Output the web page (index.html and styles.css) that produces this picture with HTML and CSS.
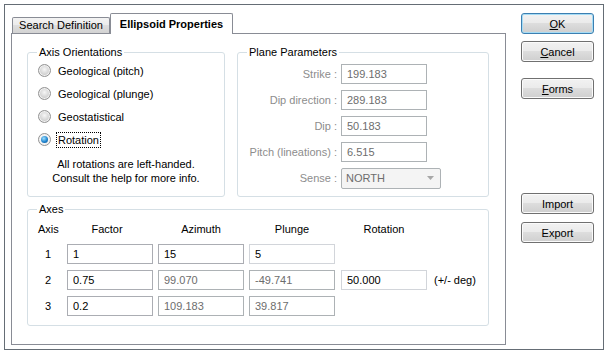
FILE: index.html
```html
<!DOCTYPE html>
<html>
<head>
  <title>Ellipsoid Properties</title>
  <link rel="stylesheet" href="styles.css">
</head>
<body>
  <div class="dialog">
    <div class="main">
      <div class="tabs">
        <div class="tab">Search Definition</div>
        <div class="tab active">Ellipsoid Properties</div>
      </div>
      <div class="panel">
        <div class="top-row">
          <fieldset class="group orient">
            <legend>Axis Orientations</legend>
            <div class="radios">
              <div class="option"><span class="radio"></span>Geological (pitch)</div>
              <div class="option"><span class="radio"></span>Geological (plunge)</div>
              <div class="option"><span class="radio"></span>Geostatistical</div>
              <div class="option"><span class="radio checked"></span><span class="focus">Rotation</span></div>
            </div>
            <div class="note">All rotations are left-handed.<br>Consult the help for more info.</div>
          </fieldset>

          <fieldset class="group plane">
            <legend>Plane Parameters</legend>
            <div class="plane-rows">
              <span class="label">Strike :</span>
              <input class="field" type="text" value="199.183" disabled>
              <span class="label">Dip direction :</span>
              <input class="field" type="text" value="289.183" disabled>
              <span class="label">Dip :</span>
              <input class="field" type="text" value="50.183" disabled>
              <span class="label">Pitch (lineations) :</span>
              <input class="field" type="text" value="6.515" disabled>
              <span class="label">Sense :</span>
              <div class="combo">
                <span>NORTH</span>
                <svg width="7" height="4" viewBox="0 0 7 4"><path d="M0 0h7L3.5 4z" fill="#a7a7a7"/></svg>
              </div>
            </div>
          </fieldset>
        </div>

        <fieldset class="group axes">
          <legend>Axes</legend>
          <div class="axes-rows">
            <div class="axes-row head">
              <span class="num-head">Axis</span>
              <span class="col-head factor-head">Factor</span>
              <span class="col-head">Azimuth</span>
              <span class="col-head">Plunge</span>
              <span class="col-head rot-head">Rotation</span>
            </div>
            <div class="axes-row">
              <span class="num">1</span>
              <input class="field" type="text" value="1">
              <input class="field" type="text" value="15">
              <input class="field soft" type="text" value="5">
            </div>
            <div class="axes-row">
              <span class="num">2</span>
              <input class="field" type="text" value="0.75">
              <input class="field" type="text" value="99.070" disabled>
              <input class="field" type="text" value="-49.741" disabled>
              <input class="field soft rot" type="text" value="50.000">
              <span class="unit">(+/- deg)</span>
            </div>
            <div class="axes-row">
              <span class="num">3</span>
              <input class="field" type="text" value="0.2">
              <input class="field" type="text" value="109.183" disabled>
              <input class="field" type="text" value="39.817" disabled>
            </div>
          </div>
        </fieldset>
      </div>
    </div>

    <div class="side">
      <button class="btn default"><u>O</u>K</button>
      <button class="btn cancel"><u>C</u>ancel</button>
      <button class="btn forms"><u>F</u>orms</button>
      <button class="btn import">Import</button>
      <button class="btn export">Export</button>
    </div>
  </div>
</body>
</html>
```

FILE: styles.css
```css
body {
  margin: 0;
  background-color: #fff;
  font-family: "Liberation Sans", Arial, sans-serif;
  font-size: 11px;
  color: #000;
}
.dialog {
  display: flex;
  margin: 4px 0 0 4px;
  width: 600px;
  height: 346px;
  box-sizing: border-box;
  border: 1px solid #656d75;
}
.main {
  margin-left: 6px;
  padding-top: 8px;
  width: 495px;
}
.tabs {
  display: flex;
  align-items: flex-end;
  height: 20px;
  position: relative;
  z-index: 1;
}
.tab {
  box-sizing: border-box;
  width: 98px;
  height: 16px;
  margin-left: 1px;
  border: 1px solid #898c95;
  border-bottom: none;
  border-radius: 2px 2px 0 0;
  background: linear-gradient(#f3f3f3, #ebebeb 50%, #dedede 50%, #d3d3d3);
  text-align: center;
  line-height: 14px;
}
.tab.active {
  width: 123px;
  height: 21px;
  margin: 0 0 -1px 0;
  background: #fff;
  font-weight: bold;
  line-height: 20px;
}
.panel {
  box-sizing: border-box;
  height: 312px;
  border: 1px solid #898c95;
  background-color: #fff;
  padding: 11px 16px 0 15px;
}
.top-row {
  display: flex;
  gap: 12px;
}
.group {
  margin: 0;
  padding: 0;
  min-width: 0;
  box-sizing: border-box;
  border: 1px solid #d5dfe5;
  border-radius: 3px;
}
.group legend {
  padding: 0 2px;
  margin-left: 9px;
  line-height: 14px;
}
.orient {
  width: 198px;
  height: 152px;
}
.plane {
  width: 252px;
  height: 152px;
}
.axes {
  width: 462px;
  height: 124px;
  margin-top: 5px;
}
.radios {
  padding-left: 10px;
}
.option {
  display: flex;
  align-items: center;
  gap: 7px;
  height: 23px;
}
.radio {
  display: flex;
  align-items: center;
  justify-content: center;
  width: 13px;
  height: 13px;
  box-sizing: border-box;
  border: 1px solid #939393;
  border-radius: 50%;
  background: radial-gradient(circle at 50% 40%, #f6f6f6, #d4d4d4 55%, #bdbdbd);
  box-shadow: inset 0 0 0 1px #f2f2f2;
}
.radio.checked {
  background: #f4f4f4;
}
.radio.checked::after {
  content: "";
  width: 7px;
  height: 7px;
  border-radius: 50%;
  background: radial-gradient(circle at 40% 35%, #9fe0ff, #2185cf 55%, #0b4f8c);
}
.focus {
  outline: 1px dotted #000;
  outline-offset: 1px;
}
.note {
  margin-top: 6px;
  text-align: center;
  line-height: 14px;
}
.plane-rows {
  display: grid;
  grid-template-columns: 99px auto;
  grid-auto-rows: 26px;
  column-gap: 4px;
  align-items: center;
  justify-items: start;
  padding-top: 2px;
}
.label {
  justify-self: end;
  color: #8d8d8d;
}
.field {
  box-sizing: border-box;
  width: 86px;
  height: 20px;
  margin: 0;
  padding: 0 5px;
  border: 1px solid #abadb3;
  border-radius: 0;
  background-color: #fff;
  font-family: inherit;
  font-size: 11px;
  color: #000;
  outline: none;
}
.field:disabled {
  color: #6d6d6d;
  border-color: #adb2b5;
  background-color: #fff;
}
.field.soft {
  border-color: #d2d5da;
}
.combo {
  display: flex;
  align-items: center;
  justify-content: space-between;
  box-sizing: border-box;
  width: 100px;
  height: 21px;
  padding: 0 6px 0 4px;
  border: 1px solid #adb2b5;
  border-radius: 2px;
  background-color: #f4f4f4;
  color: #6d6d6d;
}
.axes-rows {
  padding-left: 10px;
}
.axes-row {
  display: flex;
  align-items: center;
  gap: 5px;
  height: 26px;
}
.axes-row.head {
  height: 25px;
}
.num-head {
  width: 24px;
}
.num {
  width: 20px;
  margin-right: 4px;
  text-align: center;
}
.col-head {
  width: 86px;
  text-align: center;
}
.factor-head {
  box-sizing: border-box;
  padding-right: 6px;
}
.rot-head {
  margin-left: 1px;
}
.field.rot {
  margin-left: 1px;
}
.unit {
  margin-left: 2px;
}
.side {
  display: flex;
  flex-direction: column;
  width: 73px;
  margin-left: 15px;
  padding-top: 8px;
}
.btn {
  box-sizing: border-box;
  width: 73px;
  height: 21px;
  padding: 0;
  border: 1px solid #707070;
  border-radius: 3px;
  background: linear-gradient(#f2f2f2, #ebebeb 45%, #dddddd 50%, #cfcfcf);
  box-shadow: inset 0 0 0 1px #fbfbfb;
  font-family: inherit;
  font-size: 11px;
  color: #000;
}
.btn.default {
  border-color: #3c7fb1;
  box-shadow: inset 0 0 0 1px #a6dcf5;
}
.cancel {
  margin-top: 7px;
}
.forms {
  margin-top: 16px;
}
.import {
  margin-top: 94px;
}
.export {
  margin-top: 8px;
}
```
